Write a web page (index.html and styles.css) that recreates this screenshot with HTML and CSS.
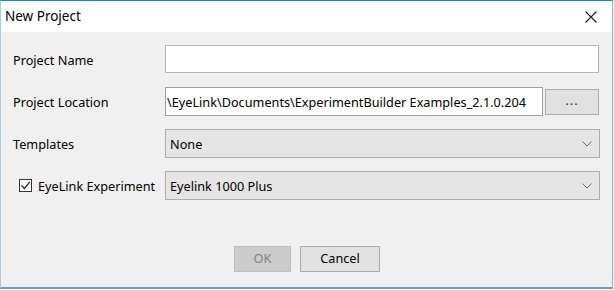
FILE: index.html
```html
<!DOCTYPE html>
<html lang="en">
<head>
    <meta charset="UTF-8">
    <title>New Project</title>
    <link rel="stylesheet" href="styles.css">
</head>
<body>
    <div class="window">
        <div class="title-bar">
            <span class="title">New Project</span>
            <button class="close-button" aria-label="Close">
                <svg width="12" height="12" viewBox="0 0 12 12"><path d="M0.5 0.5 L11.5 11.5 M11.5 0.5 L0.5 11.5" stroke="#1e1e1e" stroke-width="1.1" fill="none"/></svg>
            </button>
        </div>
        <div class="dialog-body">
            <div class="form-grid">
                <label class="field-label" for="project-name">Project Name</label>
                <input class="text-input" id="project-name" type="text">

                <label class="field-label" for="project-location">Project Location</label>
                <div class="location-row">
                    <div class="text-input location-input" id="project-location">\EyeLink\Documents\ExperimentBuilder Examples_2.1.0.204</div>
                    <button class="browse-button">...</button>
                </div>

                <label class="field-label">Templates</label>
                <div class="combo">
                    <span>None</span>
                    <svg class="chevron" width="10" height="6" viewBox="0 0 10 6"><path d="M0.5 0.5 L5 5 L9.5 0.5" stroke="#6d6d6d" stroke-width="1" fill="none"/></svg>
                </div>

                <label class="field-label check-label">
                    <span class="checkbox">
                        <svg width="11" height="11" viewBox="0 0 11 11"><path d="M1.5 5.5 L4.3 8.5 L9.8 1.8" stroke="#262626" stroke-width="1.3" fill="none"/></svg>
                    </span>
                    EyeLink Experiment
                </label>
                <div class="combo">
                    <span>Eyelink 1000 Plus</span>
                    <svg class="chevron" width="10" height="6" viewBox="0 0 10 6"><path d="M0.5 0.5 L5 5 L9.5 0.5" stroke="#6d6d6d" stroke-width="1" fill="none"/></svg>
                </div>
            </div>
            <div class="button-row">
                <button class="dialog-button ok-button" disabled>OK</button>
                <button class="dialog-button cancel-button">Cancel</button>
            </div>
        </div>
    </div>
</body>
</html>
```

FILE: styles.css
```css
:root {
    --face-color: #f0f0f0;
    --control-color: #e1e1e1;
    --control-border: #adadad;
    --text-color: #000000;
}

body {
    margin: 0;
    padding: 0;
    background-color: #ffffff;
    font-family: 'Noto Sans', 'Open Sans', sans-serif;
    font-size: 12.7px;
    color: var(--text-color);
}

.window {
    width: 613px;
    height: 289px;
    box-sizing: border-box;
    border-top: 1px solid #1883d7;
    border-left: 1px solid #a9cbea;
    border-right: 1px solid #7db2e2;
    border-bottom: 2px solid #5d9cd6;
    background-color: var(--face-color);
    display: flex;
    flex-direction: column;
}

.title-bar {
    height: 31px;
    background-color: #ffffff;
    display: flex;
    align-items: center;
    justify-content: space-between;
    padding: 0 14px 0 4px;
}

.title {
    font-size: 13.5px;
    color: #000000;
    padding-bottom: 1px;
}

.close-button {
    background: none;
    border: none;
    padding: 0;
    display: flex;
    margin-right: 1px;
}

.dialog-body {
    flex: 1;
    padding: 13px 12px 0 12px;
}

.form-grid {
    display: grid;
    grid-template-columns: 152px 434px;
    grid-auto-rows: 29px;
    row-gap: 13px;
}

.field-label {
    display: flex;
    align-items: center;
}

.text-input {
    box-sizing: border-box;
    height: 28px;
    margin: 0;
    border: 1px solid #b7b7b7;
    background-color: #ffffff;
    font: inherit;
}

.location-row {
    display: flex;
    gap: 2px;
    align-items: center;
}

.location-input {
    flex: 1;
    height: 29px;
    border-color: #a0a0a0;
    display: flex;
    align-items: center;
    padding-left: 1px;
    white-space: nowrap;
    overflow: hidden;
}

.browse-button {
    width: 54px;
    height: 26px;
    background-color: var(--control-color);
    border: 1px solid var(--control-border);
    font: inherit;
    color: #333333;
    padding: 0 0 4px 0;
    letter-spacing: 1px;
}

.combo {
    box-sizing: border-box;
    height: 29px;
    margin-right: -1px;
    background-color: #e5e5e5;
    border: 1px solid var(--control-border);
    display: flex;
    align-items: center;
    justify-content: space-between;
    padding: 0 7px 0 4px;
}

.chevron {
    display: block;
}

.check-label {
    padding-left: 6px;
    gap: 6px;
}

.checkbox {
    width: 13px;
    height: 13px;
    box-sizing: border-box;
    border: 1px solid #333333;
    background-color: #ffffff;
    display: flex;
    align-items: center;
    justify-content: center;
}

.button-row {
    display: flex;
    justify-content: center;
    gap: 9px;
    margin-top: 46px;
    margin-left: 1px;
}

.dialog-button {
    height: 26px;
    box-sizing: border-box;
    font: inherit;
    padding: 0 0 2px 0;
}

.ok-button {
    width: 57px;
    background-color: #cccccc;
    border: 1px solid #bfbfbf;
    color: #838383;
}

.cancel-button {
    width: 80px;
    background-color: var(--control-color);
    border: 1px solid var(--control-border);
    color: #000000;
}
```
